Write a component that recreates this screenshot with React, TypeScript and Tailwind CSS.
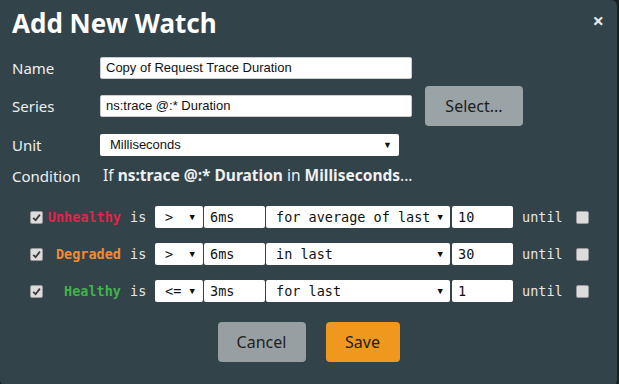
import React from 'react';

const UI = "font-['Noto_Sans',sans-serif]";
const MONO = "font-['DejaVu_Sans_Mono',monospace]";
const FIELD = "font-['Liberation_Sans',Arial,sans-serif]";

interface Rule {
  label: string;
  color: string;
  op: string;
  value: string;
  mode: string;
  count: string;
}

const RULES: Rule[] = [
  { label: 'Unhealthy', color: 'text-[#e5224a]', op: '>', value: '6ms', mode: 'for average of last', count: '10' },
  { label: 'Degraded', color: 'text-[#f28a35]', op: '>', value: '6ms', mode: 'in last', count: '30' },
  { label: 'Healthy', color: 'text-[#3fb34a]', op: '<=', value: '3ms', mode: 'for last', count: '1' },
];

function Check({ checked }: { checked: boolean }) {
  return (
    <span className="flex h-[13px] w-[13px] items-center justify-center rounded-[2px] border border-[#9a9a9a] bg-[#dcdcdc]">
      {checked && (
        <svg width="9" height="9" viewBox="0 0 9 9">
          <path d="M1.2 4.8 L3.6 7.2 L7.9 1.6" stroke="#3a3a3a" strokeWidth="1.8" fill="none" />
        </svg>
      )}
    </span>
  );
}

function Arrow() {
  return <span className="text-[9px] leading-none text-[#111]">▼</span>;
}

function RuleRow({ rule }: { rule: Rule }) {
  return (
    <div className={`flex h-[22px] items-center text-[13.5px] ${MONO}`}>
      <div className="ml-[18px] flex w-[91px] items-center">
        <Check checked />
        <span className={`ml-auto font-bold ${rule.color}`}>{rule.label}</span>
      </div>
      <span className="ml-[9px] w-[25px] text-[#e6e6e6]">is</span>
      <div className="flex h-[22px] w-[48px] items-center justify-between rounded-[2px] bg-white pl-[10px] pr-[8px] text-[#111]">
        <span>{rule.op}</span>
        <Arrow />
      </div>
      <div className="ml-px flex h-[22px] w-[61px] items-center rounded-[2px] bg-white pl-[6px] text-[#111]">
        {rule.value}
      </div>
      <div className="ml-px flex h-[22px] w-[184px] items-center justify-between rounded-[2px] bg-white pl-[10px] pr-[7px] text-[#111]">
        <span>{rule.mode}</span>
        <Arrow />
      </div>
      <div className="ml-[2px] flex h-[22px] w-[61px] items-center rounded-[2px] bg-white pl-[6px] text-[#111]">
        {rule.count}
      </div>
      <span className="ml-[9px] w-[54px] text-[#e6e6e6]">until</span>
      <Check checked={false} />
    </div>
  );
}

export default function App() {
  return (
    <div className="h-[384px] w-[619px] overflow-hidden bg-[#1a1f21]">
      <div className={`relative h-[386px] w-[617px] rounded-r-[6px] rounded-bl-[6px] bg-[#33434a] pl-[12px] ${UI}`}>
        <button className="absolute right-[13px] top-[11px] text-[20px] font-bold leading-none text-[#e8e8e8]">×</button>

        <h1 className="pt-[6px] text-[26px] font-bold leading-[34px] text-white">Add New Watch</h1>

        <div className="mt-[17px] flex h-[22px] items-center text-[15px] text-[#eef0f1]">
          <span className="w-[88px]">Name</span>
          <div className={`flex h-[22px] w-[312px] items-center rounded-[2px] border border-[#ccc] bg-white pl-[5px] text-[13px] text-[#111] ${FIELD}`}>
            Copy of Request Trace Duration
          </div>
        </div>

        <div className="mt-[7px] flex h-[40px] items-center text-[15px] text-[#eef0f1]">
          <span className="w-[88px]">Series</span>
          <div className={`flex h-[22px] w-[312px] items-center rounded-[2px] border border-[#ccc] bg-white pl-[5px] text-[13px] text-[#111] ${FIELD}`}>
            ns:trace @:* Duration
          </div>
          <button className="ml-[13px] h-[40px] w-[98px] rounded-[4px] bg-[#9aa3a6] text-[16px] text-[#1e1e1e]">Select...</button>
        </div>

        <div className="mt-[8px] flex h-[22px] items-center text-[15px] text-[#eef0f1]">
          <span className="w-[88px]">Unit</span>
          <div className={`flex h-[22px] w-[299px] items-center justify-between rounded-[2px] bg-white pl-[10px] pr-[7px] text-[13px] text-[#111] ${FIELD}`}>
            <span>Milliseconds</span>
            <Arrow />
          </div>
        </div>

        <div className="mt-[9px] flex h-[22px] items-center text-[15px] text-[#eef0f1]">
          <span className="w-[91px]">Condition</span>
          <span className="text-[15.5px]">
            If <b>ns:trace @:* Duration</b> in <b>Milliseconds</b>...
          </span>
        </div>

        <div className="mt-[19px] flex flex-col gap-[15px]">
          {RULES.map((r) => (
            <RuleRow key={r.label} rule={r} />
          ))}
        </div>

        <div className="mt-[20px] flex justify-center gap-[20px] pr-[12px] text-[16px] text-[#222]">
          <button className="h-[40px] w-[88px] rounded-[4px] bg-[#979fa3]">Cancel</button>
          <button className="h-[40px] w-[74px] rounded-[4px] bg-[#f0971e]">Save</button>
        </div>
      </div>
    </div>
  );
}
